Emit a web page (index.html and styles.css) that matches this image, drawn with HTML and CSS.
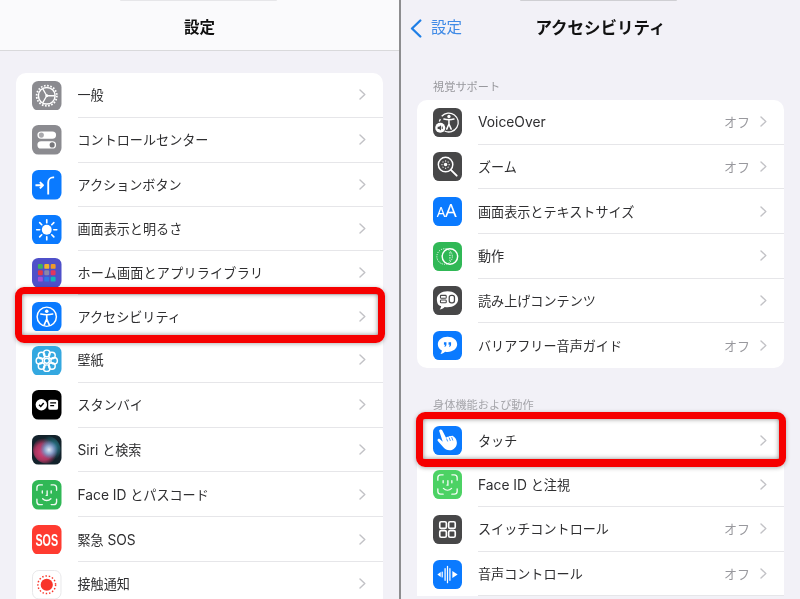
FILE: index.html
```html
<!DOCTYPE html>
<html lang="ja">
<head>
<meta charset="utf-8">
<title>設定 アクセシビリティ</title>
<link rel="stylesheet" href="styles.css">
</head>
<body>
<svg class="defs" width="0" height="0" aria-hidden="true">
  <defs>
    <symbol id="chev" viewBox="0 0 7 11"><path d="M1 .9 5.800 5.500 1 10.100" fill="none" stroke="#c2c2c6" stroke-width="1.400" stroke-linecap="round" stroke-linejoin="round"/></symbol>
    <radialGradient id="siri-pink" cx="38%" cy="58%" r="50%">
      <stop offset="0" stop-color="#e0457f"/><stop offset=".6" stop-color="#a8365f"/><stop offset="1" stop-color="#a8365f" stop-opacity="0"/>
    </radialGradient>
    <radialGradient id="siri-blue" cx="58%" cy="50%" r="34%">
      <stop offset="0" stop-color="#dfe8f4"/><stop offset=".45" stop-color="#8ea3cc"/><stop offset="1" stop-color="#5a6ea8" stop-opacity="0"/>
    </radialGradient>
    <radialGradient id="siri-teal" cx="72%" cy="40%" r="45%">
      <stop offset="0" stop-color="#2c8c9c"/><stop offset="1" stop-color="#2c8c9c" stop-opacity="0"/>
    </radialGradient>
    <symbol id="face" viewBox="0 0 30 30">
      <g fill="none" stroke="#fff" stroke-width="1.400" stroke-linecap="round" stroke-opacity=".92">
        <path d="M5 10.500V8A3 3 0 0 1 8 5h2.500M19.500 5H22a3 3 0 0 1 3 3v2.500M25 19.500V22a3 3 0 0 1-3 3h-2.500M10.500 25H8a3 3 0 0 1-3-3v-2.500"/>
        <path d="M10.500 11v2.200M19.500 11v2.200M15.400 11v4.600h-1M10.800 19c2.400 2.400 6 2.400 8.400 0"/>
      </g>
    </symbol>
  </defs>
</svg>
<main class="screen">
  <section class="panel">
    <header class="nav nav-root">
      <span class="notch"></span>
      <h1 class="title">設定</h1>
    </header>
    <div class="card card-root">
      <div class="row">
        <svg class="ic" viewBox="0 0 30 30"><rect width="30" height="30" rx="6.500" fill="#8b8b90"/><circle cx="15" cy="15" r="10.300" fill="none" stroke="#fff" stroke-width="1.800" stroke-dasharray="1.700 1.540"/><circle cx="15" cy="15" r="8.500" fill="none" stroke="#fff" stroke-width="1.500"/><path d="M15 15H23M15 15 11 8M15 15 11 22" stroke="#fff" stroke-width="1.300"/><circle cx="15" cy="15" r="1.500" fill="#fff"/></svg>
        <div class="body"><span class="label">一般</span><svg class="chev"><use href="#chev"/></svg></div>
      </div>
      <div class="row">
        <svg class="ic" viewBox="0 0 30 30"><rect width="30" height="30" rx="6.500" fill="#8b8b90"/><rect x="5.500" y="6.500" width="19" height="7.500" rx="3.750" fill="#fff"/><circle cx="9.500" cy="10.250" r="2.600" fill="#a9a9ad"/><rect x="5.500" y="16.500" width="19" height="7.500" rx="3.750" fill="#fff"/><circle cx="20.500" cy="20.250" r="2.600" fill="#77777c"/></svg>
        <div class="body"><span class="label">コントロールセンター</span><svg class="chev"><use href="#chev"/></svg></div>
      </div>
      <div class="row">
        <svg class="ic" viewBox="0 0 30 30"><rect width="30" height="30" rx="6.500" fill="#0a7aff"/><path d="M3.500 15.500h7.500M8 12.300l3.200 3.200L8 18.700" fill="none" stroke="#fff" stroke-width="1.900" stroke-linejoin="round"/><path d="M16.500 25V12.500A5 5 0 0 1 21.500 7.500h1" fill="none" stroke="#fff" stroke-width="1.900"/></svg>
        <div class="body"><span class="label">アクションボタン</span><svg class="chev"><use href="#chev"/></svg></div>
      </div>
      <div class="row row-short">
        <svg class="ic" viewBox="0 0 30 30"><rect width="30" height="30" rx="6.500" fill="#0a7aff"/><circle cx="15" cy="15" r="5" fill="#fff"/><path d="M15 4.800v3M15 22.200v3M4.800 15h3M22.200 15h3M7.800 7.800l2.100 2.100M20.100 20.100l2.100 2.100M7.800 22.200l2.100-2.100M20.100 9.900l2.100-2.100" stroke="#fff" stroke-width="1.700" stroke-linecap="round"/></svg>
        <div class="body"><span class="label">画面表示と明るさ</span><svg class="chev"><use href="#chev"/></svg></div>
      </div>
      <div class="row row-tight">
        <svg class="ic" viewBox="0 0 30 30"><rect width="30" height="30" rx="6.500" fill="#4f50c9"/><rect x="6" y="6" width="5" height="5" rx="1.200" fill="#3fb25f"/><rect x="12.500" y="6" width="5" height="5" rx="1.200" fill="#f0b52d"/><rect x="19" y="6" width="5" height="5" rx="1.200" fill="#ee9a2a"/><rect x="6" y="12.500" width="5" height="5" rx="1.200" fill="#e53945"/><rect x="12.500" y="12.500" width="5" height="5" rx="1.200" fill="#8a86a8"/><rect x="19" y="12.500" width="5" height="5" rx="1.200" fill="#e2365f"/><rect x="6" y="19" width="5" height="5" rx="1.200" fill="#a24fd8"/><rect x="12.500" y="19" width="5" height="5" rx="1.200" fill="#2c78e6"/><rect x="19" y="19" width="5" height="5" rx="1.200" fill="#15b5b8"/></svg>
        <div class="body"><span class="label label-wide">ホーム画面とアプリライブラリ</span><svg class="chev"><use href="#chev"/></svg></div>
      </div>
      <div class="row row-tight row-hl">
        <svg class="ic" viewBox="0 0 30 30"><rect width="30" height="30" rx="6.500" fill="#0a7aff"/><circle cx="15" cy="15" r="9.800" fill="none" stroke="#fff" stroke-width="1.500"/><circle cx="15" cy="9.400" r="1.800" fill="#fff"/><path d="M9 12.200c4 1 8 1 12 0M15 13v4.500M15 17.300l-2.600 6M15 17.300l2.600 6" fill="none" stroke="#fff" stroke-width="1.700" stroke-linecap="round"/></svg>
        <div class="body"><span class="label">アクセシビリティ</span><svg class="chev"><use href="#chev"/></svg></div>
        <span class="hl hl-left"></span>
      </div>
      <div class="row">
        <svg class="ic" viewBox="0 0 30 30"><rect width="30" height="30" rx="6.500" fill="#34a8e0"/><g fill="none" stroke="#fff" stroke-width="1.500"><circle cx="15" cy="7.500" r="3.300"/><circle cx="20.300" cy="9.700" r="3.300"/><circle cx="22.500" cy="15" r="3.300"/><circle cx="20.300" cy="20.300" r="3.300"/><circle cx="15" cy="22.500" r="3.300"/><circle cx="9.700" cy="20.300" r="3.300"/><circle cx="7.500" cy="15" r="3.300"/><circle cx="9.700" cy="9.700" r="3.300"/><circle cx="15" cy="15" r="2.600"/></g></svg>
        <div class="body"><span class="label">壁紙</span><svg class="chev"><use href="#chev"/></svg></div>
      </div>
      <div class="row">
        <svg class="ic" viewBox="0 0 30 30"><rect width="30" height="30" rx="6.500" fill="#000"/><circle cx="9.500" cy="15" r="5.800" fill="#fff"/><path d="M7.200 15l1.700 1.700 3-3.400" fill="none" stroke="#000" stroke-width="1.500"/><rect x="16.500" y="9.800" width="10" height="10.400" rx="2" fill="#fff"/><path d="M18.500 13h6M18.500 15.800h4" stroke="#000" stroke-width="1.300"/></svg>
        <div class="body"><span class="label">スタンバイ</span><svg class="chev"><use href="#chev"/></svg></div>
      </div>
      <div class="row">
        <svg class="ic" viewBox="0 0 30 30"><rect width="30" height="30" rx="6.500" fill="#13222b"/><circle cx="15" cy="15" r="14" fill="url(#siri-pink)"/><circle cx="15" cy="15" r="14" fill="url(#siri-teal)"/><circle cx="15" cy="15" r="14" fill="url(#siri-blue)"/></svg>
        <div class="body"><span class="label"><span class="lat">Siri</span> と検索</span><svg class="chev"><use href="#chev"/></svg></div>
      </div>
      <div class="row">
        <svg class="ic" viewBox="0 0 30 30"><rect width="30" height="30" rx="6.500" fill="#30b856"/><use href="#face" width="30" height="30"/></svg>
        <div class="body"><span class="label"><span class="lat">Face ID</span> とパスコード</span><svg class="chev"><use href="#chev"/></svg></div>
      </div>
      <div class="row">
        <svg class="ic" viewBox="0 0 30 30"><rect width="30" height="30" rx="6.500" fill="#ff3b30"/><text class="ic-sos" text-anchor="middle" transform="translate(15 21) scale(.66 1)">SOS</text></svg>
        <div class="body"><span class="label">緊急 <span class="lat">SOS</span></span><svg class="chev"><use href="#chev"/></svg></div>
      </div>
      <div class="row">
        <svg class="ic" viewBox="0 0 30 30"><rect x=".5" y=".5" width="29" height="29" rx="6.500" fill="#fff" stroke="#e8e8ea"/><circle cx="15" cy="15" r="6.200" fill="#f8352a"/><circle cx="15" cy="15" r="9" fill="none" stroke="#f8352a" stroke-width="1.500" stroke-dasharray="1.500 1.900"/></svg>
        <div class="body"><span class="label">接触通知</span><svg class="chev"><use href="#chev"/></svg></div>
      </div>
    </div>
  </section>
  <div class="divider"></div>
  <section class="panel panel-right">
    <header class="nav">
      <span class="notch notch-dark"></span>
      <a class="back">
        <svg class="back-ic" viewBox="0 0 12 19"><path d="M10.300 1.500 2 9.500l8.300 8" fill="none" stroke="#1f7fe6" stroke-width="2.300" stroke-linecap="round" stroke-linejoin="round"/></svg>
        <span>設定</span>
      </a>
      <h1 class="title title-big">アクセシビリティ</h1>
    </header>
    <h2 class="sec sec-first">視覚サポート</h2>
    <div class="card">
      <div class="row">
        <svg class="ic" viewBox="0 0 30 30"><rect width="30" height="30" rx="6.500" fill="#474748"/><path d="M9 8.500A9.800 9.800 0 1 1 12 23.800" fill="none" stroke="#fff" stroke-width="1.300"/><path d="M7.600 11.500 6.500 14" fill="none" stroke="#fff" stroke-width="1.300"/><circle cx="16.500" cy="8.800" r="1.700" fill="#fff"/><path d="M11.300 11.500c3.500.8 7 .8 10.400 0M16.500 12v4.700M16.500 16.500l-2.300 5.300M16.500 16.500l2.300 5.300" fill="none" stroke="#fff" stroke-width="1.600" stroke-linecap="round"/><circle cx="7.500" cy="20.500" r="5.200" fill="#fff"/><path d="M4.800 19.300h1.500l2-1.500v5.400l-2-1.500H4.800z" fill="#474748"/><path d="M9.600 19.200v2.600" stroke="#474748" stroke-width="1"/></svg>
        <div class="body"><span class="label"><span class="lat">VoiceOver</span></span><span class="val">オフ</span><svg class="chev"><use href="#chev"/></svg></div>
      </div>
      <div class="row">
        <svg class="ic" viewBox="0 0 30 30"><rect width="30" height="30" rx="6.500" fill="#474748"/><circle cx="13" cy="13" r="7.500" fill="none" stroke="#fff" stroke-width="1.500"/><path d="M18.500 18.500 24.500 24.500" stroke="#fff" stroke-width="2" stroke-linecap="round"/><circle cx="13" cy="13" r="1.800" fill="#fff"/><path d="M13 8.800v1M13 16.200v1M8.800 13h1M16.200 13h1M10 10l.7.700M15.300 15.300l.7.700M10 16l.7-.700M15.300 10.700l.7-.700" stroke="#fff" stroke-width="1.200"/></svg>
        <div class="body"><span class="label">ズーム</span><span class="val">オフ</span><svg class="chev"><use href="#chev"/></svg></div>
      </div>
      <div class="row">
        <svg class="ic" viewBox="0 0 30 30"><rect width="30" height="30" rx="6.500" fill="#0a7aff"/><text class="ic-aa ic-aa-s" x="8.300" y="20.500" text-anchor="middle">A</text><text class="ic-aa" x="18.600" y="20.500" text-anchor="middle">A</text></svg>
        <div class="body"><span class="label">画面表示とテキストサイズ</span><svg class="chev"><use href="#chev"/></svg></div>
      </div>
      <div class="row">
        <svg class="ic" viewBox="0 0 30 30"><rect width="30" height="30" rx="6.500" fill="#30b856"/><circle cx="12" cy="15" r="8" fill="none" stroke="#fff" stroke-width="1" stroke-dasharray="1.200 1.200"/><circle cx="17.500" cy="15" r="8" fill="none" stroke="#fff" stroke-width="1.500"/><path d="M17.500 10.500v9" stroke="#fff" stroke-width="1.100" stroke-dasharray="1.300 1.300"/></svg>
        <div class="body"><span class="label">動作</span><svg class="chev"><use href="#chev"/></svg></div>
      </div>
      <div class="row">
        <svg class="ic" viewBox="0 0 30 30"><rect width="30" height="30" rx="6.500" fill="#474748"/><path d="M15 5.500c6.200 0 11 3.500 11 8.300s-4.800 8.300-11 8.300c-1 0-2-.1-2.900-.3-1.400 1.400-3.300 2.400-5.300 2.600.9-1 1.500-2.300 1.600-3.800C5.700 21.100 4 17.700 4 13.800c0-4.800 4.800-8.300 11-8.300z" fill="#fff"/><rect x="7.700" y="9.700" width="6" height="3" rx=".8" fill="none" stroke="#474748" stroke-width="1.100"/><rect x="7.700" y="14.400" width="6" height="3" rx=".8" fill="none" stroke="#474748" stroke-width="1.100"/><rect x="16.800" y="9.700" width="5.400" height="7.800" rx="2.200" fill="none" stroke="#474748" stroke-width="1.300"/></svg>
        <div class="body"><span class="label">読み上げコンテンツ</span><svg class="chev"><use href="#chev"/></svg></div>
      </div>
      <div class="row row-last">
        <svg class="ic" viewBox="0 0 30 30"><rect width="30" height="30" rx="6.500" fill="#0a7aff"/><path d="M15 6c5.800 0 10 3.300 10 7.800s-4.200 7.800-10 7.800c-.8 0-1.600-.1-2.400-.2-1.400 1.300-3.100 2.100-4.800 2.300.8-1 1.300-2.100 1.400-3.400C6.700 19.100 5 16.700 5 13.800 5 9.300 9.200 6 15 6z" fill="#fff"/><path d="M11.300 11.600h2.600v2.300c0 1.200-.6 2-1.800 2.400l-.4-.8c.6-.2.9-.6 1-1.200h-1.400zM16.100 11.600h2.600v2.300c0 1.200-.6 2-1.800 2.400l-.4-.8c.6-.2.9-.6 1-1.200h-1.400z" fill="#0a7aff"/></svg>
        <div class="body"><span class="label">バリアフリー音声ガイド</span><span class="val">オフ</span><svg class="chev"><use href="#chev"/></svg></div>
      </div>
    </div>
    <h2 class="sec sec-second">身体機能および動作</h2>
    <div class="card card-open">
      <div class="row row-hl">
        <svg class="ic" viewBox="0 0 30 30"><rect width="30" height="30" rx="6.500" fill="#0a7aff"/><path d="M7.200 3.800c.8-.5 1.800-.1 2.300.7l4 7.700.3-.2c.5-1 1.500-1.200 2.300-.8.500-.8 1.500-1 2.300-.6.600-.6 1.500-.7 2.200-.3 2.500 1.500 4.100 4 4.100 6.900 0 4.400-3.400 7.800-7.500 7.800-2.800 0-4.800-1-6.500-3.100L5 15.500c-.5-.7-.4-1.500.2-2 .6-.4 1.400-.4 2 .2l2.900 2.700L6.500 5.500c-.3-.7 0-1.300.7-1.700z" fill="#fff"/><path d="M14 13l1.200 3M16.700 12l1.300 3.500M19.300 11.500l1.200 3.500" stroke="#0a7aff" stroke-width=".8" fill="none"/></svg>
        <div class="body"><span class="label">タッチ</span><svg class="chev"><use href="#chev"/></svg></div>
        <span class="hl"></span>
      </div>
      <div class="row">
        <svg class="ic" viewBox="0 0 30 30"><rect width="30" height="30" rx="6.500" fill="#4cd264"/><use href="#face" width="30" height="30"/></svg>
        <div class="body"><span class="label"><span class="lat">Face ID</span> と注視</span><svg class="chev"><use href="#chev"/></svg></div>
      </div>
      <div class="row">
        <svg class="ic" viewBox="0 0 30 30"><rect width="30" height="30" rx="6.500" fill="#474748"/><g fill="none" stroke="#fff" stroke-width="1.700"><rect x="7" y="7" width="6.800" height="6.800" rx="1.500"/><rect x="16.200" y="7" width="6.800" height="6.800" rx="1.500"/><rect x="7" y="16.200" width="6.800" height="6.800" rx="1.500"/><rect x="16.200" y="16.200" width="6.800" height="6.800" rx="1.500"/></g></svg>
        <div class="body"><span class="label">スイッチコントロール</span><span class="val">オフ</span><svg class="chev"><use href="#chev"/></svg></div>
      </div>
      <div class="row">
        <svg class="ic" viewBox="0 0 30 30"><rect width="30" height="30" rx="6.500" fill="#0a7aff"/><path d="M9.500 12.500v5M12.500 9v12M15 6.500v17M17.500 9v12" stroke="#fff" stroke-width="1.300" stroke-linecap="round"/><path d="M4.500 15 8 12.500v5zM25.500 15 20 11.500v7z" fill="#fff"/></svg>
        <div class="body"><span class="label">音声コントロール</span><span class="val">オフ</span><svg class="chev"><use href="#chev"/></svg></div>
      </div>
    </div>
  </section>
</main>
</body>
</html>
```

FILE: styles.css
```css
* { box-sizing: border-box; }
html, body { margin: 0; padding: 0; }
body {
  width: 800px;
  height: 599px;
  overflow: hidden;
  background: #f2f1f7;
  font-family: Inter, "Noto Sans CJK JP", "Noto Sans", sans-serif;
  color: #2c2c2e;
}
.defs { display: block; height: 0; }
.screen { display: flex; width: 800px; height: 599px; overflow: hidden; filter: blur(.3px); }
.panel { width: 399px; height: 599px; overflow: hidden; background: #f2f1f7; flex: none; }
.divider { width: 2px; background: #8d8d8f; flex: none; }

.nav {
  position: relative;
  height: 51px;
  display: flex;
  align-items: center;
  justify-content: center;
  padding-top: 5px;
}
.nav-root { background: #fafafc; border-bottom: 1px solid #d9d9db; }
.notch {
  position: absolute;
  top: 0;
  left: 120px;
  width: 157px;
  height: 1px;
  background: #e6e6e9;
  border-radius: 0 0 2px 2px;
}
.notch-dark { background: #cfcfd3; left: 119px; }
.title { margin: 0; font-size: 15.500px; font-weight: 700; color: #111; line-height: 20px; }
.title-big { font-size: 16.500px; }
.back {
  position: absolute;
  left: 9px;
  top: 18px;
  display: flex;
  align-items: center;
  gap: 9px;
  color: #3f8ae6;
  font-size: 15.500px;
  line-height: 20px;
}
.back-ic { width: 12px; height: 19px; }

.sec {
  margin: 0 16px 0 32px;
  font-size: 11.200px;
  font-weight: 400;
  line-height: 14px;
  color: #98989d;
}
.sec-first { padding-top: 29px; margin-bottom: 6px; }
.sec-second { padding-top: 30px; height: 50px; margin-bottom: 0; color: #a5a5aa; }

.card { margin: 0 16px; background: #fff; border-radius: 10px; overflow: visible; }
.card-root { margin-top: 22px; border-radius: 10px; }
.card-root .row { height: 44.800px; }
.card-root .row-short { height: 44px; }
.card-root .row-tight { height: 43.300px; }
.card-open { border-radius: 10px 10px 0 0; }

.row {
  position: relative;
  display: flex;
  align-items: center;
  height: 44.650px;
  padding-left: 16px;
  gap: 16px;
}
.ic { width: 29.500px; height: 29.500px; flex: none; }
.panel-right .ic { width: 29px; height: 29px; }
.body {
  flex: 1;
  height: 100%;
  display: flex;
  align-items: center;
  min-width: 0;
  padding-right: 17px;
  border-bottom: 1px solid #e6e6e9;
}
.row-last .body { border-bottom: 0; }
.row-hl .body { border-bottom: 0; }
.label { flex: 1; padding-top: 1px; font-size: 13.100px; line-height: 18px; color: #2f2f31; white-space: nowrap; }
.label-wide { letter-spacing: .2px; }
.lat { font-size: 13.800px; }
.val { font-size: 13px; color: #98989d; margin-right: 10px; }
.chev { width: 7px; height: 11px; flex: none; }

.hl {
  position: absolute;
  left: -1.500px;
  right: -2px;
  top: -6.200px;
  bottom: -5px;
  border: 7px solid #f60000;
  border-bottom-width: 8px;
  border-radius: 9px;
  box-shadow: inset 0 0 5px rgba(0, 0, 0, .45), 0 1px 4px rgba(0, 0, 0, .3);
}
.hl-left { top: -8px; }
.ic-sos { font-family: "Liberation Sans", sans-serif; font-weight: 700; font-size: 16.500px; fill: #fff; }
.ic-aa { font-family: "Noto Sans", sans-serif; font-size: 19px; fill: #fff; }
.ic-aa-s { font-size: 14px; }
```
